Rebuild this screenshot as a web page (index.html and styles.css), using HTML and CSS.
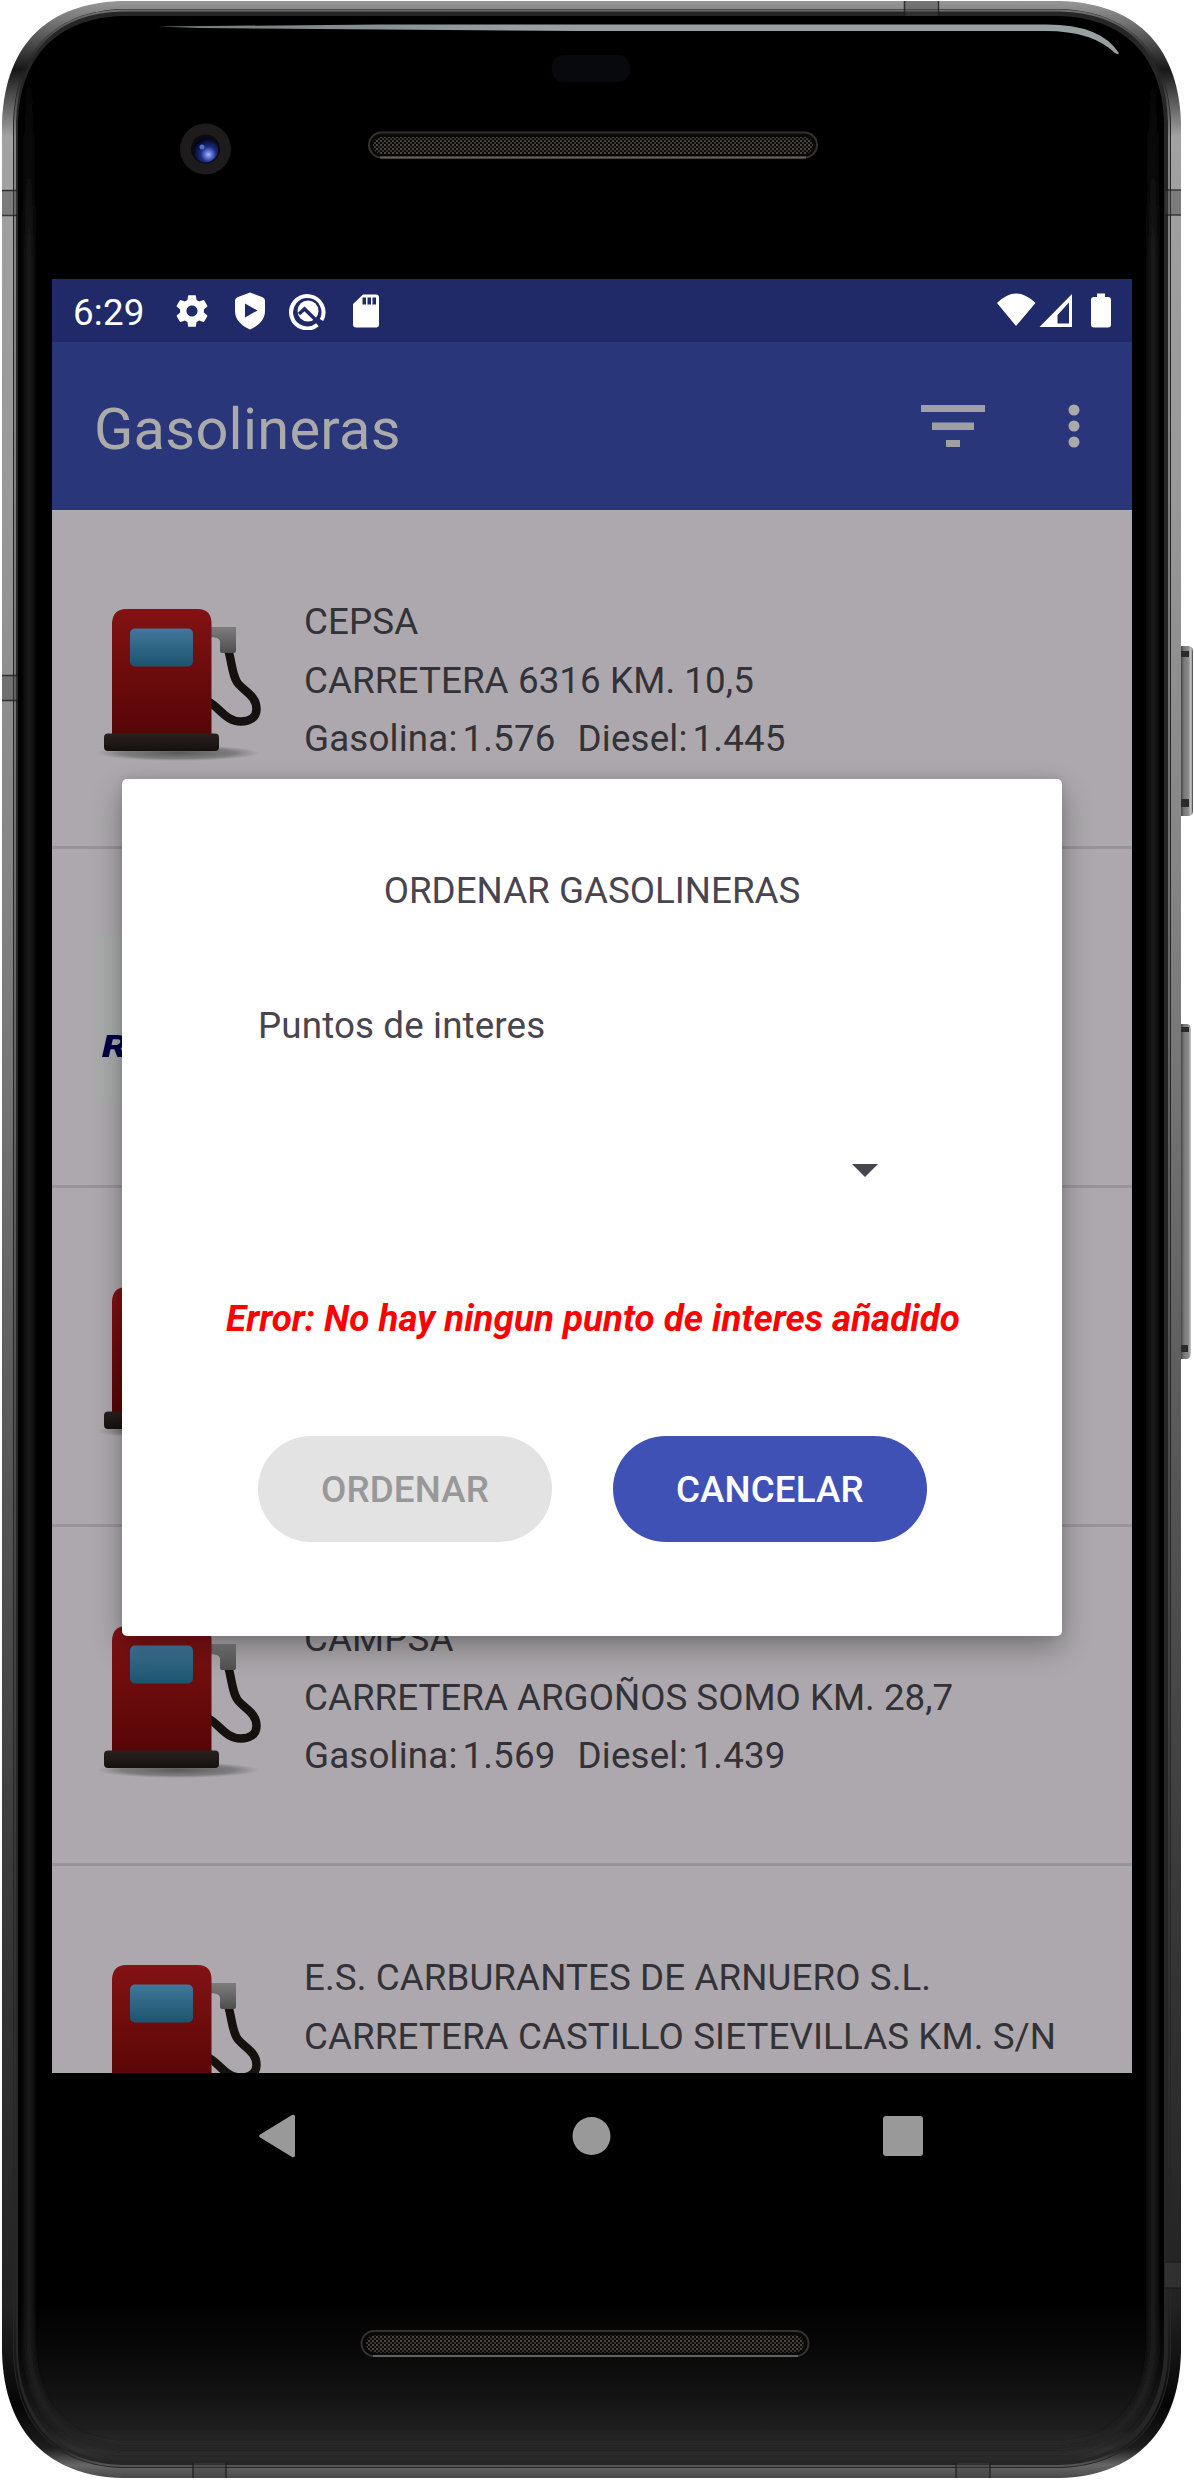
FILE: index.html
```html
<!DOCTYPE html>
<html lang="es">
<head>
<meta charset="utf-8">
<title>Gasolineras</title>
<link rel="stylesheet" href="styles.css">
</head>
<body>
<div class="device">
  <svg class="shell" width="1194" height="2480" viewBox="0 0 1194 2480" aria-hidden="true">
    <defs>
      <linearGradient id="metal" x1="0" y1="0" x2="0" y2="2480" gradientUnits="userSpaceOnUse">
        <stop offset="0" stop-color="#999"/><stop offset=".012" stop-color="#666"/><stop offset=".028" stop-color="#161616"/>
        <stop offset=".04" stop-color="#555"/><stop offset=".055" stop-color="#a2a2a2"/><stop offset=".2" stop-color="#989898"/>
        <stop offset=".35" stop-color="#858585"/><stop offset=".6" stop-color="#555"/><stop offset=".8" stop-color="#333"/>
        <stop offset=".93" stop-color="#222"/><stop offset=".97" stop-color="#050505"/><stop offset=".987" stop-color="#1c1c1c"/>
        <stop offset=".994" stop-color="#666"/><stop offset="1" stop-color="#444"/>
      </linearGradient>
      <linearGradient id="glass" x1="0" y1="2300" x2="0" y2="2462" gradientUnits="userSpaceOnUse">
        <stop offset="0" stop-color="#000"/><stop offset=".4" stop-color="#0b0b0b"/><stop offset=".8" stop-color="#1e1e1e"/><stop offset=".93" stop-color="#303030"/><stop offset="1" stop-color="#262626"/>
      </linearGradient>
      <linearGradient id="button" x1="1180" y1="0" x2="1193" y2="0" gradientUnits="userSpaceOnUse">
        <stop offset="0" stop-color="#333"/><stop offset=".3" stop-color="#777"/><stop offset=".65" stop-color="#8b8b8b"/><stop offset=".85" stop-color="#ccc"/><stop offset="1" stop-color="#333"/>
      </linearGradient>
      <linearGradient id="glow" x1="0" y1="60" x2="0" y2="260" gradientUnits="userSpaceOnUse">
        <stop offset="0" stop-color="#222" stop-opacity="0"/><stop offset="1" stop-color="#222"/>
      </linearGradient>
      <filter id="soft" x="-5%" y="-5%" width="110%" height="110%"><feGaussianBlur stdDeviation="3"/></filter>
      <linearGradient id="shine" x1="160" y1="0" x2="520" y2="0" gradientUnits="userSpaceOnUse">
        <stop offset="0" stop-color="#6f7a7a"/><stop offset="1" stop-color="#98a0a1"/>
      </linearGradient>
      <radialGradient id="lens" cx=".62" cy=".68" r=".62">
        <stop offset="0" stop-color="#a9b8f4"/><stop offset=".22" stop-color="#6077d8"/><stop offset=".5" stop-color="#1b2c80"/><stop offset="1" stop-color="#04071c"/>
      </radialGradient>
      <pattern id="mesh" width="4" height="4" patternUnits="userSpaceOnUse">
        <rect width="4" height="4" fill="#0c0b0a"/><rect width="2" height="2" fill="#4b463f"/><rect x="2" y="2" width="2" height="2" fill="#3b3732"/>
      </pattern>
    </defs>
    <path d="M1180 646h9q4 0 4 6v158q0 6-4 6h-9zM1180 1024h7q4 0 4 6v322q0 7-4 7h-7z" fill="url(#button)"/>
    <path d="M1181 651h8v6h-8zM1181 799h8v8h-8zM1181 1027h8v5h-8zM1181 1345h7v7h-7z" fill="#2a2a2a"/>
    <path d="M122 1H1060C1132 3 1178 42 1181 122V2352C1179 2434 1132 2476 1060 2478H122C50 2476 4 2434 2 2352V122C5 42 50 3 122 1Z" fill="url(#metal)"/>
    <path d="M122 9H1060C1125 11 1168 48 1171 122V2352C1169 2428 1125 2466 1060 2468H122C58 2466 15 2428 13 2352V122C16 48 58 11 122 9Z" fill="#262626"/>
    <path d="M122 10.500H1060C1125 12 1167 49 1169 122V2352C1167 2426 1125 2464 1060 2466H122C58 2464 17 2426 15 2352V122C17 49 58 12 122 10.500Z" fill="none" stroke="url(#metal)" stroke-opacity=".75" stroke-width="2"/>
    <path d="M122 16H1060C1122 18 1162 54 1164 122V2352C1162 2420 1122 2460 1060 2462H122C60 2460 20 2420 18 2352V122C20 54 60 18 122 16Z" fill="url(#glass)"/>
    <path d="M29 60V2345C31 2410 66 2446 122 2448H1060C1116 2446 1151 2410 1153 2345V60" fill="none" stroke="url(#glow)" stroke-width="7" filter="url(#soft)"/>
    <path d="M158 26.500L380 24.500H1045Q1100 24 1119 53Q1118 55 1115 53Q1092 31 1046 31H580L200 28Z" fill="url(#shine)"/>
    <g fill="#444" fill-opacity=".4">
      <path d="M904 1h35v15h-35zM2 190h15v25H2zM1165 190h16v25h-16zM2 675h15v26H2zM1165 2262h16v26h-16zM193 2463h33v15h-33zM956 2463h34v15h-34z"/>
    </g>
    <path d="M904.500 1v15M938.500 1v15M2 190.500h15M2 215.500h15M1165 190h16M1165 215h16M2 675.500h15M2 700.500h15M1165 2262h16M1165 2288h16M193 2463v15M226 2463v15M956 2463v15M990 2463v15" stroke="#1a1a1a" stroke-opacity=".75" stroke-width="1.500"/>
    <rect x="552" y="55" width="78" height="27" rx="12" fill="#08090d"/>
    <circle cx="205.500" cy="149" r="25.500" fill="#1e1b1c"/>
    <circle cx="205.500" cy="149" r="14.500" fill="#0a0a10"/>
    <circle cx="205.500" cy="150" r="12.500" fill="url(#lens)"/>
    <circle cx="202" cy="147" r="2.500" fill="#526cd0"/>
    <g stroke-width="2" fill="#0a0909">
      <rect x="369" y="132.500" width="448" height="25" rx="12.500" stroke="#34312f"/>
      <rect x="361.500" y="2331" width="447" height="25" rx="12.500" stroke="#34312f"/>
    </g>
    <path d="M380 157.500H806M373 2356H798" stroke="#65605c" stroke-width="2"/>
    <rect x="373" y="137" width="440" height="17" rx="8.500" fill="url(#mesh)"/>
    <rect x="366" y="2335.500" width="438" height="17" rx="8.500" fill="url(#mesh)"/>
  </svg>

  <svg class="defs" width="0" height="0" aria-hidden="true">
    <defs>
      <linearGradient id="red" x1="0" y1="0" x2="0" y2="1"><stop offset="0" stop-color="#831214"/><stop offset="1" stop-color="#560506"/></linearGradient>
      <linearGradient id="blue" x1="0" y1="0" x2="0" y2="1"><stop offset="0" stop-color="#41789a"/><stop offset="1" stop-color="#1c536d"/></linearGradient>
      <linearGradient id="grey" x1="0" y1="0" x2="0" y2="1"><stop offset="0" stop-color="#7d7d7d"/><stop offset="1" stop-color="#4e4e4e"/></linearGradient>
      <linearGradient id="foot" x1="0" y1="0" x2="0" y2="1"><stop offset="0" stop-color="#292120"/><stop offset="1" stop-color="#15100e"/></linearGradient>
      <radialGradient id="shadow"><stop offset="0" stop-color="#555" stop-opacity=".95"/><stop offset=".7" stop-color="#666" stop-opacity=".65"/><stop offset="1" stop-color="#777" stop-opacity="0"/></radialGradient>
      <symbol id="pump" viewBox="0 0 168 168">
        <ellipse cx="84" cy="159" rx="82" ry="8" fill="url(#shadow)"/>
        <path d="M134.500 57C138 69 138 80 143 88C149 97 162.500 101 162.500 115C162.500 124 155 127.500 147 127.500C132 127.500 126 114 115 108" fill="none" stroke="#15110f" stroke-width="8.500"/>
        <path d="M115 33H142V57Q142 59 140 59H128Q126 59 126 57V47Q125 43 115 43Z" fill="url(#grey)"/>
        <path d="M18 142V29Q19 15 32 15H104Q117 15 117.500 29V142Z" fill="url(#red)"/>
        <rect x="36" y="34.500" width="63" height="38" rx="5" fill="url(#blue)"/>
        <rect x="10" y="139.500" width="115" height="17.500" rx="4" fill="url(#foot)"/>
      </symbol>
    </defs>
  </svg>

  <main class="screen">
    <header class="status">
      <span class="clock">6:29</span>
      <div class="notices">
        <svg width="38" height="38" viewBox="0 0 24 24"><path d="M19.430 12.980c.04-.32.07-.64.07-.98s-.03-.66-.07-.98l2.110-1.650c.19-.15.24-.42.12-.64l-2-3.460c-.12-.22-.39-.3-.61-.22l-2.490 1c-.52-.4-1.080-.73-1.690-.98l-.38-2.650A.488.488 0 0 0 14 2h-4c-.25 0-.46.18-.49.42l-.38 2.650c-.61.25-1.170.59-1.690.98l-2.490-1c-.23-.09-.49 0-.61.22l-2 3.460c-.13.22-.07.49.12.64l2.110 1.650c-.04.32-.07.65-.07.98s.03.66.07.98l-2.110 1.650c-.19.15-.24.42-.12.64l2 3.460c.12.22.39.3.61.22l2.490-1c.52.4 1.080.73 1.690.98l.38 2.650c.03.24.24.42.49.42h4c.25 0 .46-.18.49-.42l.38-2.650c.61-.25 1.170-.59 1.690-.98l2.490 1c.23.09.49 0 .61-.22l2-3.460c.12-.22.07-.49-.12-.64l-2.110-1.650zM12 15.500c-1.930 0-3.500-1.570-3.500-3.500s1.570-3.500 3.500-3.500 3.500 1.570 3.500 3.500-1.570 3.500-3.500 3.500z"/></svg>
        <svg width="38" height="38" viewBox="0 0 38 38"><path fill-rule="evenodd" d="M19 .5L31 5Q34 6 34 9V19C34 28 27 34 19 37.500C11 34 4 28 4 19V9Q4 6 7 5ZM14 11.500V25.500L26.500 18.500Z"/></svg>
        <svg width="38" height="38" viewBox="0 0 38 38"><path d="M28.500 32.800A16.200 16.200 0 1 1 32.500 28" fill="none" stroke="#fff" stroke-width="4"/><circle cx="19" cy="19" r="10.500"/><path d="M10 22L15.500 17L31 32" fill="none" stroke="#202a69" stroke-width="3.500"/></svg>
        <svg width="38" height="38" viewBox="0 0 38 38"><path fill-rule="evenodd" d="M16 2.500H29Q32 2.500 32 5.500V32.500Q32 35.500 29 35.500H9Q6 35.500 6 32.500V12ZM15.500 5.500V12.500H19V5.500ZM20.500 5.500V12.500H24V5.500ZM25.500 5.500V12.500H29V5.500Z"/></svg>
      </div>
      <svg class="signals" width="116" height="36" viewBox="0 0 116 36"><path d="M1 11Q20-8 39.500 11L20 34ZM76 2V35H43.500ZM73 10.500L61.500 23V31.500H73Z" fill-rule="evenodd"/><path d="M101 1.500H109V5H112Q115 5 115 8V32.500Q115 35.500 112 35.500H98Q95 35.500 95 32.500V8Q95 5 98 5H101Z"/></svg>
    </header>

    <nav class="appbar">
      <h1>Gasolineras</h1>
      <svg width="64" height="42" viewBox="0 0 64 42" fill="#9fa0a1"><path d="M0 0H64V7H0ZM11 17.500H53V25H11ZM25 35H39V42H25Z"/></svg>
      <svg width="12" height="44" viewBox="0 0 12 44" fill="#aaa"><circle cx="6" cy="6" r="5.500"/><circle cx="6" cy="22" r="5.500"/><circle cx="6" cy="38" r="5.500"/></svg>
    </nav>

    <ul class="stations">
      <li><svg class="logo"><use href="#pump"/></svg><div class="info"><p>CEPSA</p><p>CARRETERA 6316 KM. 10,5</p><p class="prices"><span>Gasolina:</span><span>1.576</span><span>Diesel:</span><span>1.445</span></p></div></li>
      <li><div class="logo brand"><span>R</span></div></li>
      <li><svg class="logo"><use href="#pump"/></svg></li>
      <li><svg class="logo"><use href="#pump"/></svg><div class="info"><p>CAMPSA</p><p class="tight">CARRETERA ARGOÑOS SOMO KM. 28,7</p><p class="prices"><span>Gasolina:</span><span>1.569</span><span>Diesel:</span><span>1.439</span></p></div></li>
      <li><svg class="logo"><use href="#pump"/></svg><div class="info"><p>E.S. CARBURANTES DE ARNUERO S.L.</p><p>CARRETERA CASTILLO SIETEVILLAS KM. S/N</p></div></li>
    </ul>

    <footer class="keys">
      <svg width="44" height="44" viewBox="0 0 44 44"><path d="M4 20L35 1Q38 0 38 3V41Q38 44 35 43L4 24Q0 22 4 20Z"/></svg>
      <svg width="44" height="44" viewBox="0 0 44 44"><circle cx="22.500" cy="22" r="19"/></svg>
      <svg width="44" height="44" viewBox="0 0 44 44"><rect x="2" y="2" width="40" height="40" rx="3"/></svg>
    </footer>

    <section class="dialog" role="dialog">
      <h2>ORDENAR GASOLINERAS</h2>
      <label>Puntos de interes</label>
      <div class="spinner"><svg width="26" height="13" viewBox="0 0 26 13"><path d="M0 0H26L13 13Z"/></svg></div>
      <p class="error">Error: No hay ningun punto de interes añadido</p>
      <div class="actions"><button class="off" disabled>ORDENAR</button><button>CANCELAR</button></div>
    </section>
  </main>
</div>
</body>
</html>
```
FILE: styles.css
```css
* { box-sizing: border-box; margin: 0; padding: 0; }
body { width: 1194px; background: #fff; font: 36.75px/43px Roboto, sans-serif; }
.device { position: relative; width: 1194px; height: 2480px; padding: 279px 62px 0 52px; overflow: hidden; }
.shell { position: absolute; left: 0; top: 0; }
.defs { position: absolute; }
.screen { position: relative; display: flex; flex-direction: column; width: 1080px; height: 1920px; }

.status { display: flex; align-items: center; height: 63px; padding: 0 20px 0 21px; background: #202a69; color: #fff; fill: #fff; }
.clock { width: 100px; padding-top: 3px; white-space: nowrap; letter-spacing: .2px; }
.notices { display: flex; gap: 20px; flex: 1; }
.notices svg { display: block; }
.signals { display: block; margin-bottom: 1px; }

.appbar { display: flex; align-items: center; height: 168px; padding: 0 52px 0 42px; background: #2a367a; }
.appbar h1 { flex: 1; padding-top: 5px; color: #aaa; font-size: 57.75px; line-height: 68px; font-weight: 400; letter-spacing: .28px; }
.appbar svg + svg { margin-left: 83px; }

.stations { height: 1563px; overflow: hidden; list-style: none; background: #aca8ad; color: #333237; }
.stations li { display: flex; gap: 42px; height: 339px; padding: 84px 42px 0; border-bottom: 3px solid #979398; }
.logo { display: block; flex: none; width: 168px; height: 168px; }
.brand { padding: 92px 0 0 8px; background: #a9abaa; color: #020345; font: italic 900 31px/44px Roboto, sans-serif; }
.brand span { display: inline-block; transform: scaleX(1.3); transform-origin: left; }
.info { padding-top: 6px; white-space: nowrap; letter-spacing: .09px; }
.info p { height: 58.500px; line-height: 43px; }
.info .tight { letter-spacing: 0; }
.info .prices { display: flex; letter-spacing: .16px; }
.prices span:nth-child(even) { margin-left: 5px; }
.prices span:nth-child(3) { margin-left: 22px; }

.keys { display: flex; justify-content: space-between; align-items: center; height: 126px; padding: 0 207px 0 205px; fill: #999; }

.dialog { position: absolute; left: 70px; top: 500px; display: flex; flex-direction: column; width: 940px; height: 857px; padding: 90px 135px 0; border-radius: 5px; background: #fff; color: #49454f; box-shadow: 0 12px 30px rgba(0, 0, 0, .3), 0 0 10px rgba(0, 0, 0, .1); }
.dialog h2 { font-size: 36.75px; font-weight: 400; text-align: center; }
.dialog label { margin: 92px 0 0 1px; letter-spacing: .13px; }
.spinner { display: flex; justify-content: flex-end; align-items: center; height: 105px; margin: 71px 49px 0 0; fill: #49454f; }
.error { margin: 74px -61px 0 -59px; color: #f00; font-weight: 700; font-style: italic; text-align: center; white-space: nowrap; }
.actions { display: flex; gap: 61px; margin: 96px 0 0 1px; }
.actions button { height: 106px; padding: 0 63px; border: 0; border-radius: 53px; background: #3f51b5; color: #fff; font: 500 36.75px/43px Roboto, sans-serif; letter-spacing: .12px; white-space: nowrap; }
.actions .off { background: #e3e3e3; color: #989899; }
```
